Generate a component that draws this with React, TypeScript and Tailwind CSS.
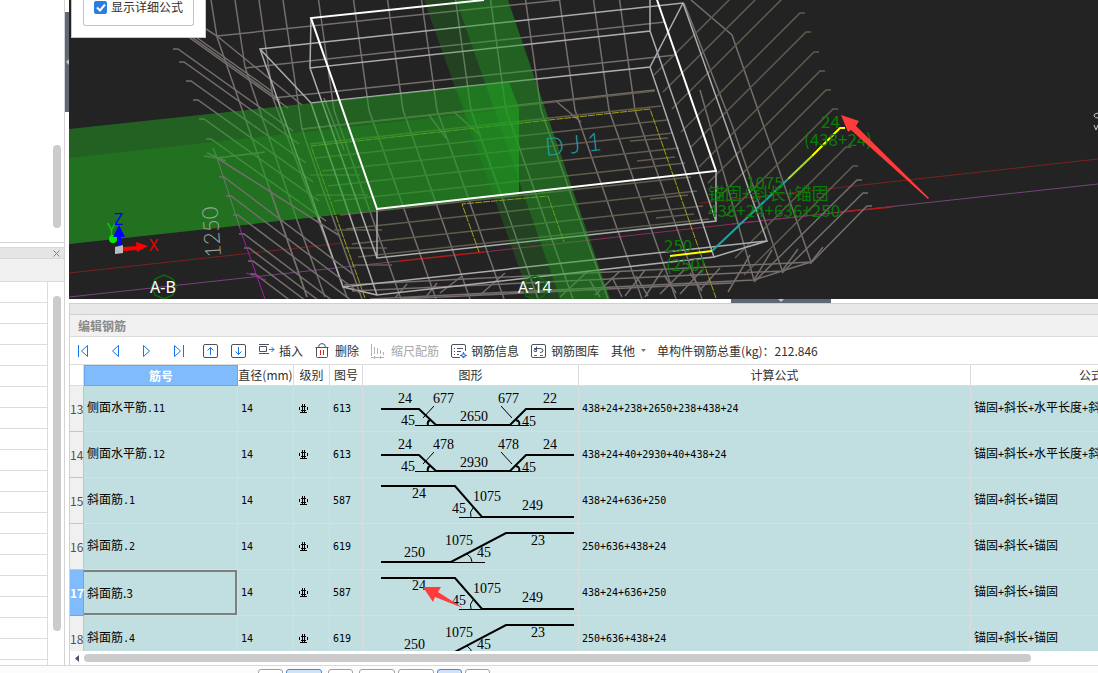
import { Fragment, type ReactNode } from 'react';

type Shape = 'bent' | 'down' | 'up';

type Bar = {
  no: number;
  name: string;
  figure: string;
  shape: Shape;
  labels: string[];
  formula: string;
  desc: string;
};

const bars: Bar[] = [
  { no: 13, name: '侧面水平筋.11', figure: '613', shape: 'bent', labels: ['24', '677', '677', '22', '2650'], formula: '438+24+238+2650+238+438+24', desc: '锚固+斜长+水平长度+斜长+锚固' },
  { no: 14, name: '侧面水平筋.12', figure: '613', shape: 'bent', labels: ['24', '478', '478', '24', '2930'], formula: '438+24+40+2930+40+438+24', desc: '锚固+斜长+水平长度+斜长+锚固' },
  { no: 15, name: '斜面筋.1', figure: '587', shape: 'down', labels: ['24', '1075', '249'], formula: '438+24+636+250', desc: '锚固+斜长+锚固' },
  { no: 16, name: '斜面筋.2', figure: '619', shape: 'up', labels: ['250', '1075', '23'], formula: '250+636+438+24', desc: '锚固+斜长+锚固' },
  { no: 17, name: '斜面筋.3', figure: '587', shape: 'down', labels: ['24', '1075', '249'], formula: '438+24+636+250', desc: '锚固+斜长+锚固' },
  { no: 18, name: '斜面筋.4', figure: '619', shape: 'up', labels: ['250', '1075', '23'], formula: '250+636+438+24', desc: '锚固+斜长+锚固' },
];

const selected = 17;

const columns = ['', '筋号', '直径(mm)', '级别', '图号', '图形', '计算公式', '公式描述'];

const views = [
  { wide: false, on: false, gap: '' },
  { wide: true, on: true, gap: 'ml-[3px]' },
  { wide: false, on: false, gap: 'ml-[6px]' },
  { wide: true, on: false, gap: 'ml-[6px]' },
  { wide: true, on: false, gap: 'ml-[3px]' },
  { wide: false, on: true, gap: 'ml-[3px]' },
  { wide: false, on: false, gap: 'ml-[3px]' },
];

// Chinese at 12px, digits and signs in a half-width mono
function Mixed({ text }: { text: string }) {
  return (
    <div className="pb-[3px] pl-[3px]">
      {text.split(/([\x20-\x7e]+)/).map((part, i) =>
        i % 2 ? (
          <span key={i} className="font-['DejaVu_Sans_Mono',monospace] text-[10px]">
            {part}
          </span>
        ) : (
          <Fragment key={i}>{part}</Fragment>
        ),
      )}
    </div>
  );
}

function Grade() {
  return (
    <svg viewBox="0 0 9 9" className="block h-[9px] w-[9px]" fill="none" stroke="#000" role="img" aria-label="HRB400">
      <path d="M3.5 0v9M5.5 0v9M2 2.5h5M2 6.5h5M.5 3v3M8.5 3v3M1 8.5h7" />
    </svg>
  );
}

function Figure({ shape, labels, arrow }: { shape: Shape; labels: string[]; arrow: boolean }) {
  return (
    <svg width="215" height="45" fill="none" stroke="#000" className="block">
      {shape === 'bent' && (
        <>
          <path d="M18 23H56L73 39H147L163 23H211" strokeWidth="2" />
          <path d="M52 39.5h20M147 39.5h19M71 20L60 32M138 20l11 12" />
          <path d="M65 39c-1-3 0-4 2-5M156 39c1-3 0-4-3-5" strokeWidth="2" />
        </>
      )}
      {shape === 'down' && (
        <>
          <path d="M18 8H92L119 39H211" strokeWidth="2" />
          <path d="M96 39.5h24M110 30q-4 4-2 9" />
        </>
      )}
      {shape === 'up' && (
        <>
          <path d="M18 38H88L143 9H211" strokeWidth="2" />
          <path d="M88 38.5h34M104 30q5 3 5 8" />
        </>
      )}
      <g stroke="none" fill="#000" className="font-['Liberation_Serif',serif] text-[14px]">
        {shape === 'bent' && (
          <>
            <text x="35" y="17">{labels[0]}</text>
            <text x="70" y="17">{labels[1]}</text>
            <text x="135" y="17">{labels[2]}</text>
            <text x="180" y="17">{labels[3]}</text>
            <text x="97" y="35">{labels[4]}</text>
            <text x="38" y="39">45</text>
            <text x="159" y="40">45</text>
          </>
        )}
        {shape === 'down' && (
          <>
            <text x="49" y="20">{labels[0]}</text>
            <text x="110" y="23">{labels[1]}</text>
            <text x="89" y="35">45</text>
            <text x="159" y="32">{labels[2]}</text>
          </>
        )}
        {shape === 'up' && (
          <>
            <text x="41" y="33">{labels[0]}</text>
            <text x="82" y="21">{labels[1]}</text>
            <text x="114" y="33">45</text>
            <text x="168" y="21">{labels[2]}</text>
          </>
        )}
      </g>
      {arrow && <path d="M60 17L78 17L75 22L100 38L72 27L70 32Z" fill="#ff3b3b" stroke="none" />}
    </svg>
  );
}

// back wall bars that bend onto the floor
const spines = [334, 369, 403, 437, 471, 506, 541, 575, 609, 635];
const rings = [21, 54, 88];
const floorRows = [122, 137, 151, 164, 179, 194, 208, 222, 237, 250];
const leftHooks = [
  [153, 10], [160, 18], [168, 26], [173, 49], [179, 62], [186, 81], [193, 100], [199, 119], [206, 139],
];
const lowerHooks = [
  [219, 177], [226, 196], [233, 215], [239, 234], [244, 248], [248, 261], [250, 274],
];
const rightHooks = [
  [778, -44], [785, -25], [792, -6], [805, 13], [811, 32], [819, 52], [825, 71], [831, 90], [838, 109], [851, 147], [858, 166],
];
const rightLowHooks = [
  [862, 180], [868, 193], [872, 206],
];

function Scene() {
  return (
    <svg viewBox="69 0 1029 299" preserveAspectRatio="xMinYMin slice" className="block h-full w-full bg-[#232323]" fill="none">
      {/* axis lines */}
      <path d="M69 273L343 243M700 203L1098 159" stroke="#7a2222" />
      <path d="M69 297L400 261M732 224L1098 184" stroke="#74457a" />
      <path d="M400 261L484 252M840 212L892 207" stroke="#b01c1c" strokeWidth="1.5" />
      <path d="M484 252L840 212" stroke="#8b2d55" />

      {/* far rebar mesh */}
      <g stroke="#756e6c" strokeWidth="1.5">
        {spines.map((x) => (
          <path key={x} d={`M${x - 16} -4L${x} 110L${x + 67} 299`} />
        ))}
        <path d="M217 36L560 0M245 68L665 22M273 98L676 55M302 129L655 90" />
        <path d="M211 0L217 37L270 190L307 297M235 0L245 67L297 220L325 297M259 0L273 98L347 297M283 0L302 129L330 210L362 299" />
        <path d="M206 29L217 36L302 105M691 0L732 35L811 262M684 3L732 125L782 270M700 90L754 280" />
      </g>

      {/* floor and side mesh */}
      <g stroke="#615c4e" strokeWidth="1.5">
        {floorRows.map((y, i) => (
          <path key={y} d={`M${304 + i * 6} ${y + 7}L${655 + i * 6} ${y - 31}`} />
        ))}
        <path d="M630 141l38-3M637 161l38-4M650 199l38-4M656 218l38-4M310 175h50M316 195h52M334 230h48M345 248h42M352 265h40" />
        {rightHooks.map(([x, y], i) => (
          <path key={y} d={`M${x} ${y}h-5L${654 + i * 9} ${y + x - 659 - i * 9}`} />
        ))}
      </g>
      <g stroke="#756e6c" strokeWidth="1.5">
        {leftHooks.map(([x, y]) => (
          <path key={y} d={`M${x} ${y}h5L${x + 120} ${y + 82}`} />
        ))}
        <path d="M324 98L344 150M429 115L446 138M454 112L480 135M557 102L581 122" />
        <path d="M344 285L811 262M352 291L782 271M370 299L754 280M400 299L732 283M811 262L782 271L754 280" />
        <path d="M395 298l12-14M425 298l12-15M440 293l22-17M480 295l25-22M560 297l28-26M595 295l25-24M625 296l20-26M645 297l18-28M660 294l24-24M680 294l22-24M700 290l20-22M728 292l22-37M754 280l18-30M782 271l16-22M811 262l12-15" />
        <path d="M636 276l12 20M612 277l10 20M690 273l12 18M664 275l12 18M590 281l10 16" />
        {rightLowHooks.map(([x, y], i) => (
          <path key={y} d={`M${x} ${y}h-5L${754 + i * 28} ${282 - i * 9}`} />
        ))}
        <path d="M204 156L217 158L265 152M213 148L217 158M207 153L226 161" />
      </g>

      {/* yellow footing outline */}
      <path d="M365 298L311 146L650 109L716 298M479 252L462 204L548 196L564 242" stroke="#a3a318" strokeDasharray="7 1" />

      {/* outer box */}
      <g stroke="#adadb0" strokeWidth="1.5">
        <path d="M311 18L310 68L650 31V0M310 68L377 258L716 221L650 31M377 209V258M716 171V221" />
        <path d="M260 49L683 3L767 241L343 287Z" />
        <path d="M260 49L311 103L650 67L683 3M311 103L377 295L714 257L650 67M343 287L377 295M714 257L767 241" />
      </g>

      {/* beams */}
      <g fill="#21a021">
        <path d="M69 129L509 82L519 108V195L69 244Z" fillOpacity=".5" />
        <path d="M69 158L519 108V195L69 244Z" fillOpacity=".27" />
        <path d="M424 0H456L560 299H530Z" fillOpacity=".25" />
        <path d="M456 0H508L610 299H560Z" fillOpacity=".5" />
        <path d="M456 87L509 82L519 108V192L500 195Z" fillOpacity=".15" />
      </g>
      <g stroke="#756e6c" strokeWidth="1.5">
        {lowerHooks.map(([x, y]) => (
          <path key={y} d={`M${x} ${y}h5L${x + 135} ${y + 98}`} />
        ))}
        <path d="M217 158L340 236M270 190L307 297" />
      </g>
      <path d="M217 158L240 228" stroke="#6b7a6b" />
      <path d="M239 226L265 299M246 273L266 280" stroke="#a31ea3" />

      {/* front box edges */}
      <path d="M484 0L311 18L377 209L716 171L657 0" stroke="#fff" strokeWidth="2" />

      {/* dimension and name tags */}
      <text transform="translate(221 257) rotate(-94)" fill="#9da79d" className="font-['Lato',sans-serif] text-[22px] font-light">1250</text>
      <text transform="translate(546 156) rotate(-6)" fill="#1e9c9c" className="font-['Lato',sans-serif] text-[25px] font-light">D J 1</text>
      <path d="M164 275l9 4 3 8-3 8-9 4-9-4-3-8 3-8ZM535 276l9 4 3 8-3 8-9 4-9-4-3-8 3-8Z" stroke="#0b6b0b" strokeWidth="1.5" />
      <g fill="#fff" className="font-['Noto_Sans',sans-serif] text-[16px]">
        <text x="150" y="293">A-B</text>
        <text x="518" y="293">A-14</text>
      </g>
      <path d="M1098 113q-5 1-4 3t4 2M1094 125l2 5 2-5" stroke="#c8c8c8" />

      {/* axis gizmo */}
      <path d="M123 249L138 248" stroke="#f00" strokeWidth="4" />
      <path d="M136 242L148 246L137 252Z" fill="#f00" />
      <circle cx="113" cy="239" r="4" fill="#0e0" />
      <path d="M119 248V234" stroke="#00f" strokeWidth="4" />
      <path d="M119 225L125 237H113Z" fill="#00f" />
      <path d="M115 247l8-2v8l-8 1Z" fill="#bdbdbd" />
      <g className="font-['Noto_Sans',sans-serif] text-[16px]">
        <text x="149" y="251" fill="#e00">X</text>
        <text x="107" y="235" fill="#0c0">Y</text>
        <text x="114" y="225" fill="#00f">Z</text>
      </g>

      {/* selected bar */}
      <g strokeWidth="2">
        <path d="M712 251L788 179" stroke="#22a3a3" />
        <path d="M788 179L812 156" stroke="#a8d832" />
        <path d="M812 156L840 128H845M670 256L712 251" stroke="#ff0" />
      </g>
      <g fill="#087d08" className="font-['Noto_Sans_CJK_SC',sans-serif] text-[17px]">
        <text x="821" y="128">24</text>
        <text x="804" y="146">(438+24)</text>
        <text x="746" y="189">1075</text>
        <text x="708" y="200">锚固+斜长+锚固</text>
        <text x="708" y="217">438+24+636+250</text>
        <text x="664" y="252">250</text>
        <text x="666" y="271">(250)</text>
      </g>
      <path d="M841 115L859 121L856 126L929 198L928 199L851 130L848 132Z" fill="#ff3b3b" />
    </svg>
  );
}

function Icon({ w, children }: { w: number; children: ReactNode }) {
  return (
    <svg width={w} height="16" viewBox={`0 0 ${w} 16`} fill="none" stroke="#4b5263" strokeWidth="1" className="block shrink-0">
      {children}
    </svg>
  );
}

function Tool({ label, disabled, children }: { label: string; disabled?: boolean; children: ReactNode }) {
  return (
    <button type="button" disabled={disabled} className="ml-3 flex items-center gap-1 disabled:text-[#a8a8a8]">
      {children}
      <span>{label}</span>
    </button>
  );
}

function Toolbar() {
  return (
    <div className="flex h-7 shrink-0 items-center whitespace-nowrap border-b border-[#dcdcdc] pl-2 text-[#303030]">
      <button type="button" aria-label="首行" className="mr-[23px]">
        <Icon w={11}><path d="M.5 2v12M9.5 2.5v11L3.5 8Z" stroke="#1a73e8" /></Icon>
      </button>
      <button type="button" aria-label="上一行" className="mr-[23px]">
        <Icon w={8}><path d="M6.5 2.5v11L.5 8Z" stroke="#1a73e8" /></Icon>
      </button>
      <button type="button" aria-label="下一行" className="mr-[23px]">
        <Icon w={8}><path d="M.5 2.5v11L6.5 8Z" stroke="#1a73e8" /></Icon>
      </button>
      <button type="button" aria-label="末行" className="mr-[18px]">
        <Icon w={11}><path d="M9.5 2v12M.5 2.5v11L6.5 8Z" stroke="#1a73e8" /></Icon>
      </button>
      <button type="button" aria-label="上移">
        <Icon w={16}>
          <rect x=".5" y="1.5" width="14" height="13" rx="1.5" />
          <path d="M7.5 12V4.5M4.5 7.5l3-3 3 3" stroke="#1a73e8" />
        </Icon>
      </button>
      <button type="button" aria-label="下移" className="ml-3">
        <Icon w={16}>
          <rect x=".5" y="1.5" width="14" height="13" rx="1.5" />
          <path d="M7.5 4v7.5M4.5 8.5l3 3 3-3" stroke="#1a73e8" />
        </Icon>
      </button>
      <Tool label="插入">
        <Icon w={16}>
          <path d="M0 1.5h10M0 10.5h10M.5 3.5v5h7v-5Z" />
          <path d="M10 6.5h5M12.5 4l2.5 2.5-2.5 2.5" stroke="#1a73e8" />
        </Icon>
      </Tool>
      <Tool label="删除">
        <Icon w={16}>
          <path d="M.5 4.500h13M3.500 4.500q0-4 3.500-4t3.500 4M1.500 4.500v9q0 1 1 1h9q1 0 1-1v-9" />
          <path d="M5.5 7v5M8.5 7v5" stroke="#e02020" />
        </Icon>
      </Tool>
      <Tool label="缩尺配筋" disabled>
        <Icon w={16}>
          <path d="M.5 1v12M3.5 4v7M6.5 5v6M9.5 7v4M12.5 9v3M0 14.5h13M3.5 13v3M9.5 13v3" stroke="#b5b5b5" />
        </Icon>
      </Tool>
      <Tool label="钢筋信息">
        <Icon w={16}>
          <path d="M9 14.5H2Q.5 14.5.5 13V3Q.5 1.5 2 1.5h11q1.5 0 1.5 1.5v5M3 5.5h1M6 5.5h6M3 8.5h1M6 8.5h4M3 11.5h1M6 11.5h2" />
          <path d="M12.5 9v2M12.5 13v2M9 12.500h2M14 12.500h2M11 11h3v3h-3Z" stroke="#1a73e8" />
        </Icon>
      </Tool>
      <Tool label="钢筋图库">
        <Icon w={16}>
          <rect x=".5" y="1.5" width="14" height="13" rx="1.5" />
          <path d="M3 5.5h6q3 0 3 2t-3 2M5.5 3.5v5H4q-1 0-1-1t1-1h2" />
          <path d="M3 12.5h3M9 12.5h3" stroke="#1a73e8" />
        </Icon>
      </Tool>
      <button type="button" className="ml-3 flex items-center gap-1.5">
        其他
        <svg width="5" height="3" viewBox="0 0 5 3"><path d="M0 0h5L2.5 3Z" fill="#777" /></svg>
      </button>
      <span className="ml-[11px]">单构件钢筋总重(kg)：212.846</span>
    </div>
  );
}

function BarTable() {
  return (
    <div className="min-h-0 flex-1 overflow-hidden">
      <table className="w-[1166px] table-fixed border-separate border-spacing-0 whitespace-nowrap">
        <colgroup>
          <col className="w-[14px]" />
          <col className="w-[154px]" />
          <col className="w-[56px]" />
          <col className="w-[36px]" />
          <col className="w-[33px]" />
          <col className="w-[216px]" />
          <col className="w-[392px]" />
          <col className="w-[265px]" />
        </colgroup>
        <thead>
          <tr>
            {columns.map((name) => (
              <th
                key={name}
                scope="col"
                className={`h-[21px] p-0 ${name === '筋号' ? 'border border-[#6aa5ea] bg-[#80bbfb] font-bold text-white' : 'border-r border-b border-[#dcdcdc] font-normal text-[#303030]'}`}
              >
                {name}
              </th>
            ))}
          </tr>
        </thead>
        <tbody>
          {bars.map((bar) => {
            const on = bar.no === selected;
            return (
              <tr key={bar.no} className="bg-[#c1dee0] text-black [&>td]:h-[46px] [&>td]:border-r [&>td]:border-b [&>td]:border-[#dadcde] [&>td]:p-0">
                <th
                  scope="row"
                  className={`h-[46px] border-r border-b p-0 text-left ${on ? 'border-[#6aa5ea] bg-[#80bbfb] font-bold text-white' : 'border-[#c4c4c4] bg-[#f0f0f0] font-normal text-[#505050]'}`}
                >
                  {bar.no}
                </th>
                <td>
                  {on ? (
                    <input
                      type="text"
                      aria-label="筋号"
                      defaultValue={bar.name}
                      className="block h-[45px] w-full border-2 border-l-0 border-[#7f7f7f] pl-[3px] outline-none"
                    />
                  ) : (
                    <Mixed text={bar.name} />
                  )}
                </td>
                <td><Mixed text="14" /></td>
                <td><div className="pl-[5px]"><Grade /></div></td>
                <td><Mixed text={bar.figure} /></td>
                <td><Figure shape={bar.shape} labels={bar.labels} arrow={on} /></td>
                <td><Mixed text={bar.formula} /></td>
                <td><Mixed text={bar.desc} /></td>
              </tr>
            );
          })}
        </tbody>
      </table>
    </div>
  );
}

function SidePanel() {
  return (
    <aside className="flex w-[65px] shrink-0 flex-col border-r border-[#d4d4d4] bg-white">
      <div className="flex h-[243px] shrink-0 items-end justify-end border-b border-[#d4d4d4] pr-[3px] pb-[14px]">
        <div className="h-[83px] w-2 rounded-full bg-[#cbcbcb]" />
      </div>
      <div className="mt-1 flex h-3 shrink-0 items-center justify-end border-y border-[#d8d8d8] bg-[#e5e5e5] pr-1">
        <button type="button" aria-label="关闭">
          <svg width="7" height="7" viewBox="0 0 7 7" stroke="#808080"><path d="M.5 .5l6 6M6.5 .5l-6 6" /></svg>
        </button>
      </div>
      <div className="h-[23px] shrink-0 border-b border-[#dcdcdc] bg-[#f1f1f1]" />
      <div className="flex min-h-0 flex-1 overflow-hidden">
        <div className="flex-1 border-r border-[#dcdcdc]">
          {Array.from({ length: 18 }, (_, i) => (
            <div key={i} className="h-[21px] border-b border-[#dcdcdc]" />
          ))}
        </div>
        <div className="w-4 pt-[14px] pl-[5px]">
          <div className="h-[335px] w-2 rounded-full bg-[#cbcbcb]" />
        </div>
      </div>
    </aside>
  );
}

export default function App() {
  return (
    <div className="flex h-screen flex-col overflow-hidden bg-white font-['Noto_Sans_CJK_SC',sans-serif] text-xs">
      <div className="flex min-h-0 flex-1 border-b border-[#d9d9d9]">
        <SidePanel />
        <div className="w-1 shrink-0 pt-3">
          <div className="flex h-[100px] items-center justify-end bg-[#5f6976]">
            <svg width="3" height="6" viewBox="0 0 3 6"><path d="M3 0v6L0 3Z" fill="#c4c8ce" /></svg>
          </div>
        </div>
        <main className="flex min-w-0 flex-1 flex-col">
          <div className="relative h-[299px] shrink-0 overflow-hidden">
            <Scene />
            <div className="absolute top-0 left-[2px] h-[38px] w-[135px] border border-t-0 border-[#c8c8c8] bg-white px-[11px]">
              <label className="flex h-[26px] items-center gap-1 rounded-b-[3px] border border-t-0 border-[#c4c4c4] pb-[11px] pl-[10px] text-[#303030]">
                <span className="grid shrink-0">
                  <input
                    type="checkbox"
                    defaultChecked
                    className="peer col-start-1 row-start-1 size-[13px] appearance-none rounded-[2px] border border-[#2b7de1] checked:bg-[#2b7de1]"
                  />
                  <svg viewBox="0 0 13 13" fill="none" stroke="#fff" strokeWidth="2" className="pointer-events-none invisible col-start-1 row-start-1 size-[13px] peer-checked:visible">
                    <path d="M3 6.5l3 3 5-6" />
                  </svg>
                </span>
                显示详细公式
              </label>
            </div>
          </div>
          <div className="h-1 shrink-0">
            <div className="ml-[662px] flex h-full w-[100px] justify-center bg-[#5f6976]">
              <svg width="6" height="3" viewBox="0 0 6 3"><path d="M0 0h6L3 3Z" fill="#c4c8ce" /></svg>
            </div>
          </div>
          <section className="flex min-h-0 flex-1 flex-col border-t border-l border-[#d0d0d0]">
            <div className="h-[11px] shrink-0 border-b border-[#d0d0d0] bg-[#e7e7e7]" />
            <h2 className="flex h-[22px] shrink-0 items-center border-b border-[#dcdcdc] bg-[#f1f1f1] pl-2 font-bold text-[#8a8a8a]">
              编辑钢筋
            </h2>
            <Toolbar />
            <BarTable />
            <div className="flex h-[14px] shrink-0 items-center gap-[5px] pl-[5px]">
              <svg width="4" height="7" viewBox="0 0 4 7"><path d="M4 0v7L0 3.5Z" fill="#4b5263" /></svg>
              <div className="h-2 w-[947px] rounded-full bg-[#cbcbcb]" />
            </div>
          </section>
        </main>
      </div>
      <footer className="flex h-[7px] shrink-0 items-start overflow-hidden bg-[#fcfcfc] pt-[3px] pl-[258px]">
        {views.map((view, i) => (
          <button
            key={i}
            type="button"
            aria-label={`视图 ${i + 1}`}
            className={`h-5 shrink-0 rounded-[3px] border ${view.gap} ${view.wide ? 'w-9' : 'w-[25px]'} ${view.on ? 'border-[#3b8be8] bg-[#cfe3fb]' : 'border-[#a0a0a0] bg-white'}`}
          />
        ))}
      </footer>
    </div>
  );
}
